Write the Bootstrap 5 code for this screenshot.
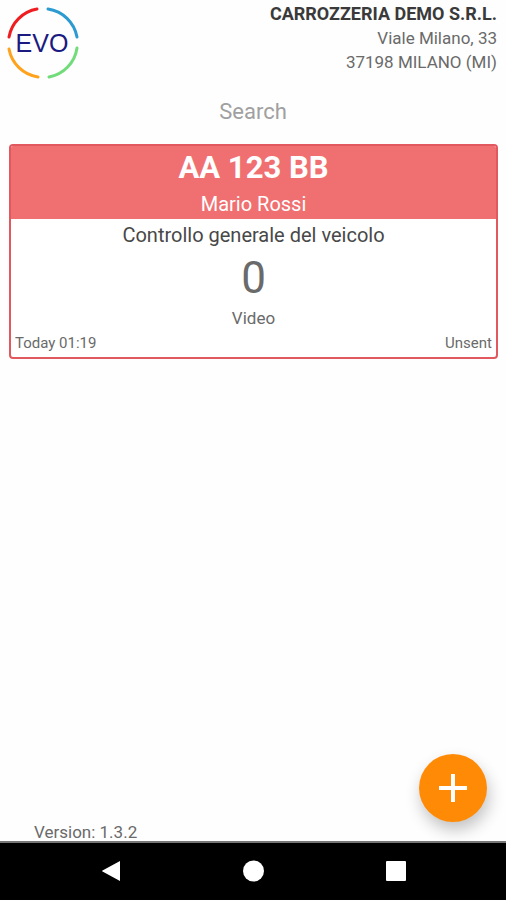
<!DOCTYPE html>
<html lang="it">
<head>
<meta charset="utf-8">
<meta name="viewport" content="width=device-width, initial-scale=1">
<title>EVO</title>
<link href="https://cdn.jsdelivr.net/npm/bootstrap@5.3.0/dist/css/bootstrap.min.css" rel="stylesheet">
<style>
body { font-family: Roboto, "Liberation Sans", sans-serif; color: #6a6a6a; background: #fefefe; }
.logo { width: 72px; height: 72px; margin: 7px 0 0 7px; }
.company { font-size: 17px; line-height: 24px; padding: 2px 9px 0 0; }
.company-name { font-size: 18px; color: #3a3a3a; }
.search-box { font-size: 22px; line-height: 32px; color: #666; }
.search-box::placeholder { color: #a0a0a0; opacity: 1; }
.search-row { padding: 17px 8px 16px; }
.job { margin: 0 8px 0 9px; border: 2px solid #e2585f; border-radius: 4px; color: #6a6a6a; }
.job:hover { color: #6a6a6a; }
.job-head { background: #f07072; height: 73px; }
.plate { font-size: 31px; line-height: 43px; }
.owner { font-size: 20px; line-height: 30px; }
.task { font-size: 20px; line-height: 32px; color: #484848; }
.count { font-size: 44px; line-height: 54px; }
.kind { font-size: 17px; line-height: 26px; }
.job-foot { font-size: 15px; line-height: 24px; padding: 0 4px 2px; }
.version { font-size: 17px; line-height: 18px; padding-left: 34px; }
.add-btn { width: 68px; height: 68px; right: 19px; bottom: 19px; background: #ff8a05; box-shadow: 2px 8px 16px rgba(0,0,0,.24); }
.add-btn:hover { background: #ff8a05; }
.sysbar { height: 59px; background: #000; border-top: 2px solid #777; padding: 0 39px; }
.sysbar button { height: 56px; }
</style>
<script src="https://cdn.jsdelivr.net/npm/bootstrap@5.3.0/dist/js/bootstrap.bundle.min.js" defer></script>
</head>
<body>
<div class="d-flex flex-column min-vh-100">
  <main class="flex-grow-1 d-flex flex-column position-relative">
    <header class="d-flex justify-content-between align-items-start">
      <svg class="logo" viewBox="7 7 72 72" role="img" aria-label="EVO">
        <g fill="none" stroke-width="3" stroke-linecap="round">
          <path d="M9 37A34.500 34.500 0 0 1 37 9" stroke="#ef1c20"/>
          <path d="M48 9A34.500 34.500 0 0 1 77 37" stroke="#2b9bd2"/>
          <path d="M9 49A34.500 34.500 0 0 0 38 77" stroke="#ffa21c"/>
          <path d="M49 77A34.500 34.500 0 0 0 77 48" stroke="#72dc7a"/>
        </g>
        <text x="42" y="52" text-anchor="middle" font-family="Liberation Sans, Arial, sans-serif" font-size="25" fill="#1a1a80">EVO</text>
      </svg>
      <address class="company text-end mb-0">
        <strong class="company-name d-block">CARROZZERIA DEMO S.R.L.</strong>
        <span class="d-block">Viale Milano, 33</span>
        <span class="d-block">37198 MILANO (MI)</span>
      </address>
    </header>
    <div class="search-row">
      <input type="text" class="search-box form-control border-0 bg-transparent text-center p-0" placeholder="Search" aria-label="Search">
    </div>
    <a href="#job" class="job d-block text-decoration-none bg-white overflow-hidden text-center">
      <div class="job-head text-white">
        <div class="plate fw-bold">AA 123 BB</div>
        <div class="owner">Mario Rossi</div>
      </div>
      <div class="task">Controllo generale del veicolo</div>
      <div class="count">0</div>
      <div class="kind">Video</div>
      <div class="job-foot d-flex justify-content-between"><span>Today 01:19</span><span>Unsent</span></div>
    </a>
    <div class="version mt-auto">Version: 1.3.2</div>
    <button type="button" class="add-btn btn border-0 rounded-circle p-0 position-absolute d-flex align-items-center justify-content-center" aria-label="Add">
      <svg width="30" height="30" viewBox="0 0 30 30" stroke="#fff" stroke-width="4"><path d="M15 1V29M1 15H29"/></svg>
    </button>
  </main>
  <nav class="sysbar d-flex" aria-label="System">
    <button type="button" class="btn border-0 p-0 flex-fill d-flex align-items-center justify-content-center" aria-label="Back">
      <svg width="22" height="22" viewBox="0 0 22 22" fill="#fff"><path d="M21 1V21L3.500 11.500Q2.500 11 3.500 10.500Z"/></svg>
    </button>
    <button type="button" class="btn border-0 p-0 flex-fill d-flex align-items-center justify-content-center" aria-label="Home">
      <svg width="22" height="22" viewBox="0 0 22 22" fill="#fff"><circle cx="11.500" cy="11" r="10.500"/></svg>
    </button>
    <button type="button" class="btn border-0 p-0 flex-fill d-flex align-items-center justify-content-center" aria-label="Recent apps">
      <svg width="22" height="22" viewBox="0 0 22 22" fill="#fff"><rect x="1" y="1" width="20" height="20" rx="1"/></svg>
    </button>
  </nav>
</div>
</body>
</html>
